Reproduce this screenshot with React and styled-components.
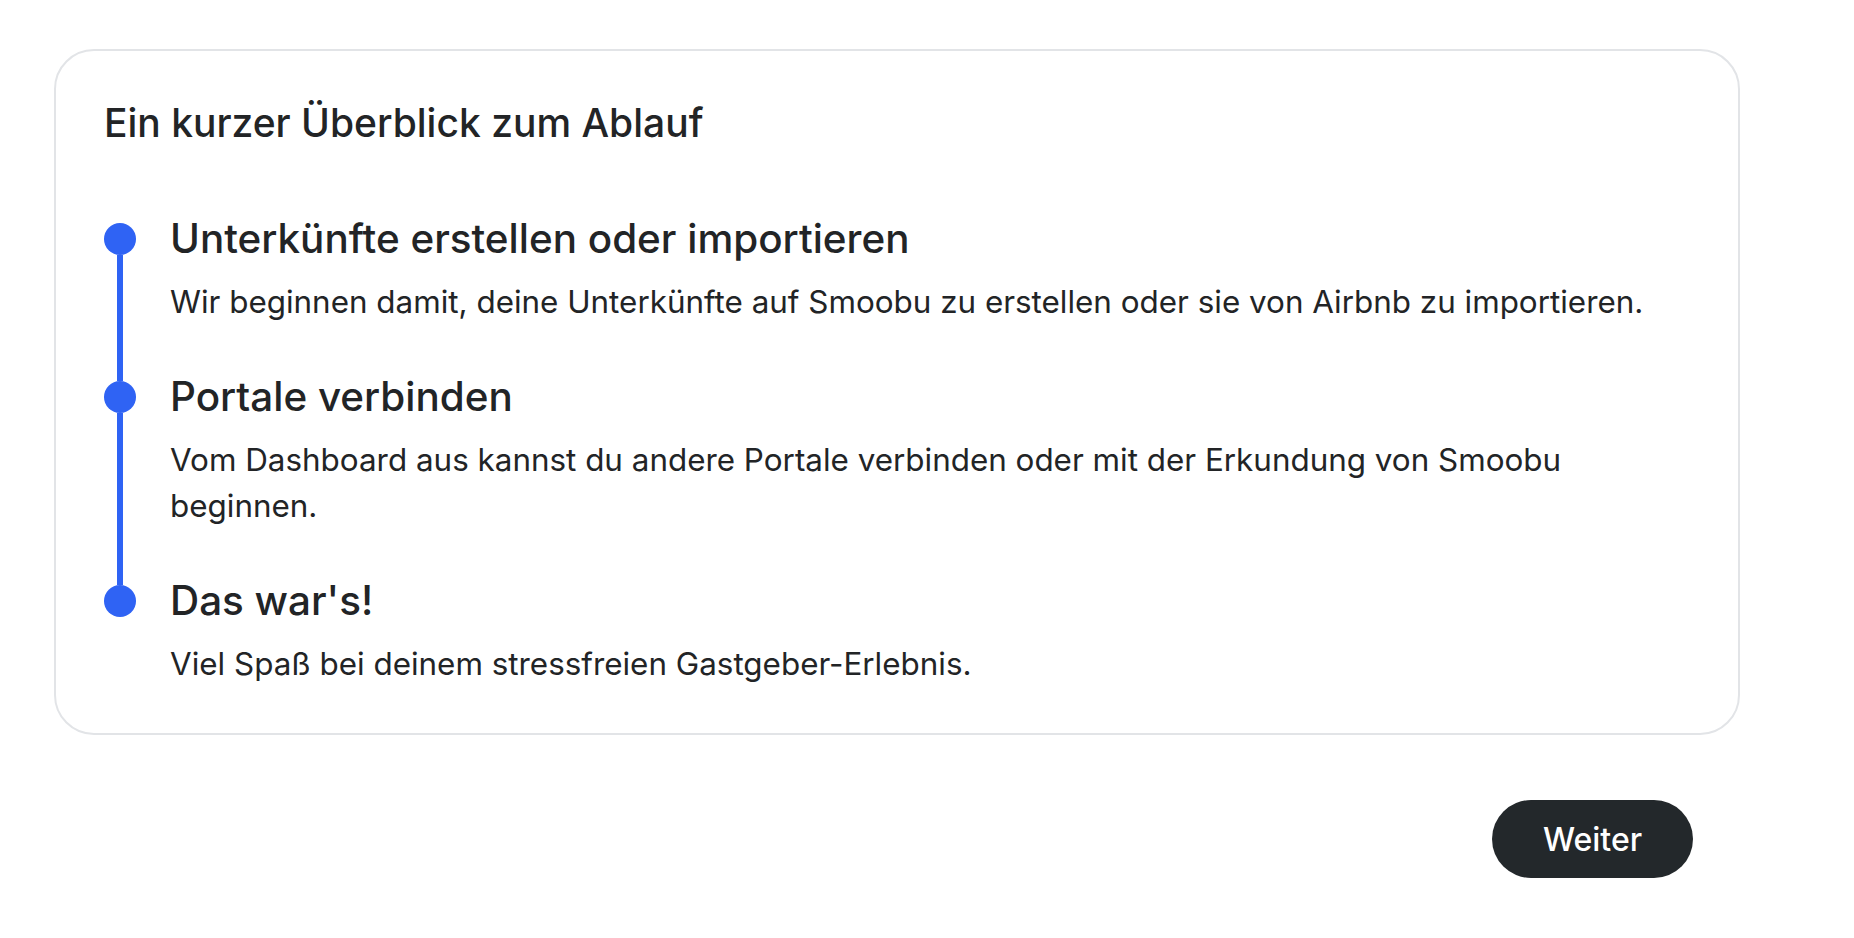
import React from "react";
import styled, { createGlobalStyle } from "styled-components";

const GlobalStyle = createGlobalStyle`
  body {
    margin: 0;
    background: #fff;
    font-family: "Inter", "Noto Sans", sans-serif;
    color: #222426;
  }
`;

const Page = styled.div`
  padding: 49px 114px 40px 54px;
`;

const Card = styled.section`
  border: 2px solid #e2e4e7;
  border-radius: 40px;
  padding: 49px 48px 46px 48px;
`;

const Title = styled.h2`
  margin: 0 0 69px 0;
  font-size: 39px;
  line-height: 46px;
  font-weight: 500;
`;

const Step = styled.div`
  display: grid;
  grid-template-columns: 32px 1fr;
  column-gap: 34px;
`;

const Marker = styled.div`
  display: flex;
  flex-direction: column;
  align-items: center;
`;

const Segment = styled.div`
  width: 6px;
  background: ${(props) => (props.show ? "#2f63f4" : "transparent")};
  height: ${(props) => (props.grow ? "auto" : "8px")};
  flex: ${(props) => (props.grow ? 1 : "none")};
`;

const Dot = styled.div`
  width: 32px;
  height: 32px;
  border-radius: 50%;
  background: #2f63f4;
  flex: none;
`;

const Content = styled.div`
  padding-bottom: ${(props) => (props.last ? "0" : "48px")};
`;

const StepTitle = styled.h3`
  margin: 0 0 16px 0;
  font-size: 40.4px;
  line-height: 48px;
  font-weight: 500;
`;

const StepText = styled.p`
  margin: 0;
  font-size: 31.4px;
  line-height: 46px;
  font-weight: 400;
  max-width: 1490px;
`;

const Footer = styled.div`
  display: flex;
  justify-content: flex-end;
  padding: 65px 47px 0 0;
`;

const Button = styled.button`
  width: 201px;
  height: 78px;
  border: none;
  border-radius: 39px;
  background: #23282b;
  color: #fff;
  font-family: "Inter", "Noto Sans", sans-serif;
  font-size: 32px;
  font-weight: 500;
  cursor: pointer;
`;

const steps = [
  {
    title: "Unterkünfte erstellen oder importieren",
    text: "Wir beginnen damit, deine Unterkünfte auf Smoobu zu erstellen oder sie von Airbnb zu importieren.",
  },
  {
    title: "Portale verbinden",
    text: "Vom Dashboard aus kannst du andere Portale verbinden oder mit der Erkundung von Smoobu beginnen.",
  },
  {
    title: "Das war's!",
    text: "Viel Spaß bei deinem stressfreien Gastgeber-Erlebnis.",
  },
];

export default function App() {
  return (
    <>
      <GlobalStyle />
      <Page>
        <Card>
          <Title>Ein kurzer Überblick zum Ablauf</Title>
          {steps.map((step, i) => {
            const first = i === 0;
            const last = i === steps.length - 1;
            return (
              <Step key={step.title}>
                <Marker>
                  <Segment show={!first} />
                  <Dot />
                  <Segment grow show={!last} />
                </Marker>
                <Content last={last}>
                  <StepTitle>{step.title}</StepTitle>
                  <StepText>{step.text}</StepText>
                </Content>
              </Step>
            );
          })}
        </Card>
        <Footer>
          <Button>Weiter</Button>
        </Footer>
      </Page>
    </>
  );
}
